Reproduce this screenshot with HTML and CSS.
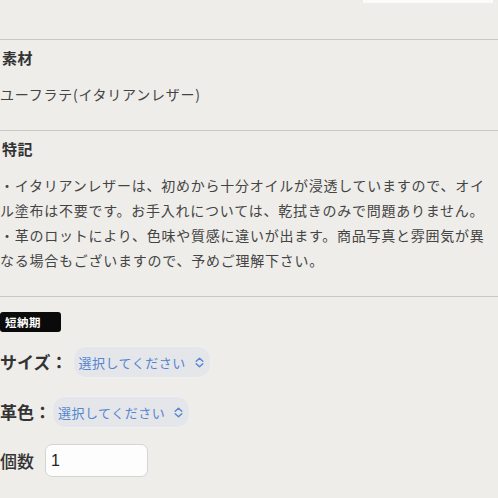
FILE: index.html
```html
<!DOCTYPE html>
<html lang="ja">
<head>
<meta charset="utf-8">
<link rel="stylesheet" href="styles.css">
</head>
<body>
<div class="page">
  <div class="top"><div class="top-strip"></div></div>
  <section class="block">
    <h3 class="block-title">素材</h3>
    <p class="block-text">ユーフラテ(イタリアンレザー)</p>
  </section>
  <section class="block">
    <h3 class="block-title">特記</h3>
    <p class="block-text">・イタリアンレザーは、初めから十分オイルが浸透していますので、オイル塗布は不要です。お手入れについては、乾拭きのみで問題ありません。<br>・革のロットにより、色味や質感に違いが出ます。商品写真と雰囲気が異なる場合もございますので、予めご理解下さい。</p>
  </section>
  <div class="options">
    <span class="badge">短納期</span>
    <div class="opt-row row-size">
      <span class="opt-label">サイズ：</span>
      <div class="select"><span class="select-text">選択してください</span>
        <svg class="chev" width="9" height="11" viewBox="0 0 9 11"><path d="M1.2 4.2 L4.5 1.2 L7.8 4.2 M1.2 6.8 L4.5 9.8 L7.8 6.8" fill="none" stroke="#5a88d2" stroke-width="1.5" stroke-linecap="round" stroke-linejoin="round"/></svg>
      </div>
    </div>
    <div class="opt-row row-color">
      <span class="opt-label">革色：</span>
      <div class="select"><span class="select-text">選択してください</span>
        <svg class="chev" width="9" height="11" viewBox="0 0 9 11"><path d="M1.2 4.2 L4.5 1.2 L7.8 4.2 M1.2 6.8 L4.5 9.8 L7.8 6.8" fill="none" stroke="#5a88d2" stroke-width="1.5" stroke-linecap="round" stroke-linejoin="round"/></svg>
      </div>
    </div>
    <div class="opt-row row-qty">
      <span class="opt-label qty-label">個数</span>
      <input class="qty" type="text" value="1">
    </div>
  </div>
</div>
</body>
</html>
```
FILE: styles.css
```css
html, body {
  margin: 0;
  padding: 0;
  background: #eeede9;
}
body {
  font-family: "Noto Sans CJK JP", "Noto Sans", sans-serif;
  color: #444;
  width: 498px;
  height: 498px;
  overflow: hidden;
}
.page {
  width: 498px;
}
.top {
  height: 39px;
  display: flex;
  justify-content: flex-end;
}
.top-strip {
  width: 130px;
  height: 3px;
  background: #fbfbfa;
  margin-right: 5px;
}
.block {
  border-top: 1px solid #c9c8c4;
  padding: 8px 0 23px 0;
}
.block-title {
  margin: 0 0 14px 2px;
  font-size: 15px;
  line-height: 20px;
  font-weight: bold;
  color: #333;
  letter-spacing: 0.5px;
}
.block-text {
  margin: 0;
  width: 494px;
  font-size: 14px;
  line-height: 25px;
  letter-spacing: 0.75px;
  color: #444;
}
.options {
  border-top: 1px solid #c9c8c4;
  padding-top: 15px;
}
.badge {
  display: block;
  box-sizing: border-box;
  background: #0a0a0a;
  color: #fff;
  font-size: 11.5px;
  font-weight: bold;
  line-height: 20px;
  height: 20px;
  width: 61px;
  padding-left: 5px;
  border-radius: 3px;
  letter-spacing: 0.5px;
}
.opt-row {
  display: flex;
  align-items: center;
}
.row-size {
  margin-top: 14px;
}
.row-color {
  margin-top: 18px;
}
.row-qty {
  margin-top: 16px;
}
.opt-label {
  font-size: 17px;
  font-weight: bold;
  color: #333;
  line-height: 24px;
  margin-right: 1px;
}
.row-size .opt-label {
  margin-right: 5px;
}
.qty-label {
  font-weight: 500;
  margin-right: 11px;
}
.select {
  display: flex;
  align-items: center;
  height: 32px;
  box-sizing: border-box;
  padding: 0 6px 0 5px;
  background: #e4e6ea;
  border: 1px solid #eef0f2;
  border-radius: 13px;
}
.select-text {
  font-size: 13px;
  letter-spacing: 0.5px;
  color: #5585d0;
  margin-right: 9px;
}
.chev {
  display: block;
}
.qty {
  width: 103px;
  height: 33px;
  box-sizing: border-box;
  border: 1px solid #d4d4d2;
  border-radius: 7px;
  background: #fdfdfd;
  font-family: "Liberation Sans", "Noto Sans", sans-serif;
  font-size: 16px;
  color: #222;
  padding: 0 0 0 5px;
  outline: none;
}
```
